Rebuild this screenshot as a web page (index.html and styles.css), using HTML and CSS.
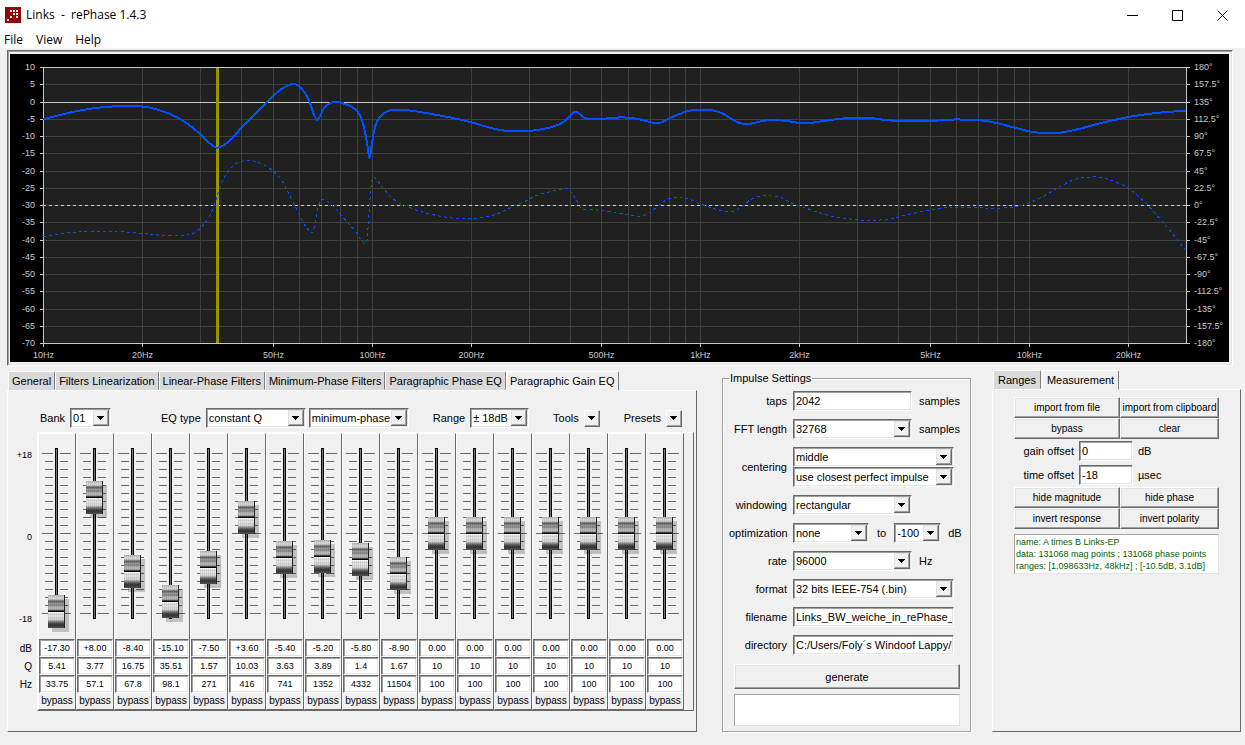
FILE: index.html
```html
<!DOCTYPE html>
<html lang="en">
<head>
    <meta charset="UTF-8">
    <title>Links - rePhase 1.4.3</title>
    <meta name="viewport" content="width=device-width,initial-scale=1.0">
    <link rel="stylesheet" href="styles.css">
</head>
<body>
<div class="titlebar">
    <svg class="logo" width="16" height="16" viewBox="0 0 16 16">
        <path fill="#900" d="M0 0h16v16H0z"/>
        <path fill="#fff" d="M5 3h2v2H5zM8 3h2v2H8zM11 3h2v2h-2zM8 6h2v2H8zM11 6h2v2h-2zM5 9h2v2H5zM11 9h2v2h-2zM2 12h2v2H2z"/>
    </svg>
    <span class="title">Links&nbsp; -&nbsp; rePhase 1.4.3</span>
    <button class="win" aria-label="minimize"><svg width="11" height="11" viewBox="0 0 11 11"><path d="M0 5.5h11"/></svg></button>
    <button class="win" aria-label="maximize"><svg width="11" height="11" viewBox="0 0 11 11"><path d="M.5 .5h10v10H.5z"/></svg></button>
    <button class="win" aria-label="close"><svg width="11" height="11" viewBox="0 0 11 11"><path d="M.5 .5l10 10M10.5 .5l-10 10"/></svg></button>
</div>
<div class="menubar">
    <button>File</button>
    <button>View</button>
    <button>Help</button>
</div>

<div class="graph">
    <svg id="chart"></svg>
</div>

<div class="main">
    <div class="left">
        <div class="tabs">
            <button>General</button>
            <button>Filters Linearization</button>
            <button>Linear-Phase Filters</button>
            <button>Minimum-Phase Filters</button>
            <button>Paragraphic Phase EQ</button>
            <button class="active">Paragraphic Gain EQ</button>
        </div>
        <div class="page">
            <div class="toolbar">
                <div class="tool">
                    <label for="bank">Bank</label>
                    <select id="bank" class="w-bank"><option>01</option></select>
                </div>
                <div class="tool eqtype">
                    <label for="eqtype">EQ type</label>
                    <select id="eqtype" class="w-type"><option>constant Q</option></select>
                    <select class="w-type phase" aria-label="phase type"><option>minimum-phase</option></select>
                </div>
                <div class="tool">
                    <label for="range">Range</label>
                    <select id="range" class="w-range"><option>± 18dB</option></select>
                </div>
                <div class="tool">
                    <label for="tools">Tools</label>
                    <button id="tools" class="drop"></button>
                </div>
                <div class="tool">
                    <label for="presets">Presets</label>
                    <button id="presets" class="drop"></button>
                </div>
            </div>
            <div class="eq">
                <div class="scale">
                    <div class="levels"><span>+18</span><span>0</span><span>-18</span></div>
                    <span>dB</span>
                    <span>Q</span>
                    <span>Hz</span>
                </div>
                <div class="bands" id="bands"></div>
            </div>
        </div>
    </div>

    <fieldset class="impulse">
        <legend>Impulse Settings</legend>
        <div class="rows">
            <label for="taps">taps</label>
            <div class="ctl"><input id="taps" class="w-mid" type="text" value="2042"><span>samples</span></div>
            <label for="fft">FFT length</label>
            <div class="ctl"><select id="fft" class="w-mid"><option>32768</option></select><span>samples</span></div>
            <label for="centering">centering</label>
            <div class="ctl stack">
                <select id="centering" class="w-full"><option>middle</option></select>
                <select class="w-full" aria-label="centering mode"><option>use closest perfect impulse</option></select>
            </div>
            <label for="windowing">windowing</label>
            <div class="ctl"><select id="windowing" class="w-mid"><option>rectangular</option></select></div>
            <label for="optimization">optimization</label>
            <div class="ctl">
                <select id="optimization" class="w-opt"><option>none</option></select>
                <label for="optlevel" class="to">to</label>
                <select id="optlevel" class="w-level"><option>-100</option></select>
                <span>dB</span>
            </div>
            <label for="rate">rate</label>
            <div class="ctl"><select id="rate" class="w-mid"><option>96000</option></select><span>Hz</span></div>
            <label for="format">format</label>
            <div class="ctl"><select id="format" class="w-full"><option>32 bits IEEE-754 (.bin)</option></select></div>
            <label for="filename">filename</label>
            <div class="ctl"><input id="filename" class="w-full" type="text" value="Links_BW_weiche_in_rePhase_eq"></div>
            <label for="directory">directory</label>
            <div class="ctl"><input id="directory" class="w-full" type="text" value="C:/Users/Foly´s Windoof Lappy/Desktop"></div>
        </div>
        <button class="raised generate">generate</button>
        <textarea class="log" aria-label="log" readonly></textarea>
    </fieldset>

    <div class="right">
        <div class="tabs">
            <button>Ranges</button>
            <button class="active">Measurement</button>
        </div>
        <div class="page measure">
            <div class="pair">
                <button class="raised">import from file</button>
                <button class="raised">import from clipboard</button>
                <button class="raised">bypass</button>
                <button class="raised">clear</button>
            </div>
            <div class="offsets">
                <label for="gain">gain offset</label><input id="gain" type="text" value="0"><span>dB</span>
                <label for="time">time offset</label><input id="time" type="text" value="-18"><span>µsec</span>
            </div>
            <div class="pair">
                <button class="raised">hide magnitude</button>
                <button class="raised">hide phase</button>
                <button class="raised">invert response</button>
                <button class="raised">invert polarity</button>
            </div>
            <div class="info">name: A times B Links-EP<br>data: 131068 mag points ; 131068 phase points<br>ranges: [1.098633Hz, 48kHz] ; [-10.5dB, 3.1dB]</div>
        </div>
    </div>
</div>
<script src="app.js"></script>
</body>
</html>
```
FILE: styles.css
```css
*{
    margin: 0;
    padding: 0;
    box-sizing: border-box;
}
body{
    background: #f0f0f0;
    color: #000;
    font: 11px/14px "Liberation Sans", Arial, sans-serif;
}
button, input, select, textarea{
    font: inherit;
    color: inherit;
    border-radius: 0;
    outline: none;
}

/* window */
.titlebar{
    display: flex;
    align-items: center;
    height: 30px;
    padding-left: 5px;
    background: #fff;
    font: 12px/16px "Open Sans", "Noto Sans", sans-serif;
}
.title{
    flex: 1;
    padding-left: 5px;
}
.logo{
    display: block;
}
.win{
    width: 45px;
    height: 28px;
    border: 0;
    background: none;
}
.win svg{
    display: block;
    margin: 0 auto;
    fill: none;
    stroke: #000;
}
.menubar{
    display: flex;
    gap: 13px;
    height: 18px;
    padding: 1px 0 0 4px;
    background: #fff;
}
.menubar button{
    border: 0;
    background: none;
    font: 12px/18px "Open Sans", "Noto Sans", sans-serif;
}

/* graph */
.graph{
    margin: 2px 12px 0 7px;
    padding: 3px 3px 3px 2px;
    border: 1px solid;
    border-color: #696969 #fff #fff #696969;
    box-shadow: inset 1px 1px #a0a0a0, inset -1px -1px #e3e3e3;
}
#chart{
    display: block;
    width: 100%;
    height: 308px;
    background: #000;
    font-size: 9px;
    fill: #c8c8c8;
}
#chart .back{ fill: #202020; }
#chart .grid{ stroke: #404040; }
#chart .axis{ stroke: #c8c8c8; }
#chart .zero{ stroke: #c8c8c8; stroke-dasharray: 3 3; }
#chart .cursor{ fill: #969600; }
#chart .end{ text-anchor: end; }
#chart .mid{ text-anchor: middle; }
#chart .mag, #chart .phase{
    fill: none;
    stroke: #0050ff;
    shape-rendering: crispEdges;
}
#chart .mag{ stroke-width: 2; }
#chart .phase{ stroke-dasharray: 3 3; }

/* lower area */
.main{
    display: grid;
    grid-template-columns: 690fr 253fr 249fr;
    column-gap: 21px;
    padding: 5px 4px 12px 7px;
}
.left, .right{
    display: flex;
    flex-direction: column;
}
.tabs{
    display: flex;
    gap: 1px;
    padding-left: 1px;
}
.tabs button{
    height: 19px;
    padding: 0 4px;
    border: 1px solid;
    border-color: #fff #808080 #d9d9d9 #fff;
    border-radius: 2px 2px 0 0;
    background: #d9d9d9;
    white-space: nowrap;
}
.left .tabs{ gap: 0; }
.left .tabs button{ padding: 0 3px; }
.tabs .active{
    position: relative;
    height: 20px;
    margin-bottom: -1px;
    border-bottom-color: #f0f0f0;
    background: #f0f0f0;
}
.page{
    flex: 1;
    border: 1px solid;
    border-color: #fff #696969 #696969 #fff;
}

/* sunken and raised boxes */
input[type=text], select{
    height: 20px;
    padding: 0 1px 0 2px;
    border: 1px solid;
    border-color: #696969 #fff #fff #696969;
    box-shadow: inset 1px 1px #a0a0a0, inset -1px -1px #e3e3e3;
    background: #fff;
}
select{
    appearance: none;
    background: #fff url("data:image/svg+xml,%3Csvg xmlns='http://www.w3.org/2000/svg' width='16' height='16' shape-rendering='crispEdges'%3E%3Cpath fill='%23696969' d='M0 0h16v16H0z'/%3E%3Cpath fill='%23e3e3e3' d='M0 0h15v15H0z'/%3E%3Cpath fill='%23a0a0a0' d='M1 1h14v14H1z'/%3E%3Cpath fill='%23f0f0f0' d='M1 1h13v13H1z'/%3E%3Cpath d='M4 6h7v1H4zM5 7h5v1H5zM6 8h3v1H6zM7 9h1v1H7z'/%3E%3C/svg%3E") right 1px center no-repeat;
}
.raised{
    border: 1px solid;
    border-color: #fff #696969 #696969 #fff;
    box-shadow: inset -1px -1px #a0a0a0, inset 1px 1px #e3e3e3;
    background: #f0f0f0;
}
.drop{
    width: 16px;
    height: 17px;
    border: 1px solid;
    border-color: #fff #696969 #696969 #fff;
    box-shadow: inset -1px -1px #a0a0a0;
    background: #f0f0f0 url("data:image/svg+xml,%3Csvg xmlns='http://www.w3.org/2000/svg' width='7' height='4' shape-rendering='crispEdges'%3E%3Cpath d='M0 0h7v1H0zM1 1h5v1H1zM2 2h3v1H2zM3 3h1v1H3z'/%3E%3C/svg%3E") center no-repeat;
}

.toolbar{
    display: flex;
    justify-content: space-between;
    align-items: center;
    height: 20px;
    margin: 17px 14px 4px 32px;
}
.tool{
    display: flex;
    align-items: center;
    gap: 5px;
}
.eqtype{ margin-left: 26px; }
.phase{ margin-left: -2px; }
.w-bank{ width: 41px; }
.w-type{ width: 100px; }
.w-range{ width: 59px; }

.eq{
    display: flex;
    padding-right: 2px;
}
.scale{
    width: 29px;
    padding-right: 5px;
    text-align: right;
    font-size: 10px;
}
.scale span{
    display: block;
    line-height: 18px;
}
.levels{
    display: flex;
    flex-direction: column;
    justify-content: space-between;
    height: 182px;
    margin: 14px 0 12px;
    font-size: 9px;
}
.bands{
    flex: 1;
    display: flex;
    border: 1px solid;
    border-color: #fff #696969 #696969 #fff;
}
.band{
    width: 38px;
    border: 1px solid;
    border-color: #fff #696969 #696969 #fff;
    font-size: 9px;
}
.fader{
    height: 205px;
    padding-top: 2px;
    background:
        linear-gradient(#777, #777) 17px 15px/1px 169px no-repeat,
        linear-gradient(#000, #000) 16px 14px/3px 171px no-repeat,
        linear-gradient(#696969, #696969) 3px 19px/11px 1px no-repeat,
        linear-gradient(#696969, #696969) 21px 19px/11px 1px no-repeat,
        linear-gradient(#696969, #696969) 3px 99px/11px 1px no-repeat,
        linear-gradient(#696969, #696969) 21px 99px/11px 1px no-repeat,
        linear-gradient(#696969, #696969) 3px 179px/11px 1px no-repeat,
        linear-gradient(#696969, #696969) 21px 179px/11px 1px no-repeat,
        repeating-linear-gradient(#696969 0 1px, transparent 1px 8px) 6px 19px/8px 161px no-repeat,
        repeating-linear-gradient(#696969 0 1px, transparent 1px 8px) 21px 19px/8px 161px no-repeat;
}
.fader input{
    appearance: none;
    display: block;
    width: 35px;
    height: 195px;
    background: none;
    writing-mode: vertical-lr;
    direction: rtl;
}
.fader input::-webkit-slider-runnable-track{
    width: 35px;
    height: 195px;
}
.fader input::-webkit-slider-thumb{
    appearance: none;
    width: 17px;
    height: 33px;
    margin-left: 9px;
    border-right: 1px solid #222;
    box-shadow: 4px 4px rgba(0,0,0,.2);
    background:
        repeating-linear-gradient(90deg, rgba(0,0,0,.08) 0 1px, transparent 1px 2px),
        linear-gradient(#bbb 0 1px, #d8d8d8 2px 4px, #aaa 5px, #666 6px 7px, #999 8px 9px, #808080 10px, #b8b8b8 12px 14px, #888 15px, #000 16px 17px, #fff 17px 18px, #ccc 19px, #f0f0f0 21px, #ccc 23px, #e8e8e8 24px, #999 26px, #555 28px, #333 30px, #555 33px);
}
.band input[type=text]{
    display: block;
    width: 36px;
    height: 18px;
    padding: 0;
    text-align: center;
}
.bypass{
    display: block;
    width: 100%;
    height: 16px;
    border: 0;
    background: none;
    font-size: 10px;
}

/* impulse settings */
.impulse{
    min-width: 0;
    margin-left: 4px;
    padding: 0 10px 5px 6px;
    border: 1px solid #a0a0a0;
    box-shadow: 1px 1px #fff, inset 1px 1px #fff;
}
.impulse legend{
    padding: 0 1px;
    background: #f0f0f0;
}
.rows{
    display: grid;
    grid-template-columns: 58px 1fr;
    gap: 8px 6px;
    align-items: center;
    margin-top: 6px;
}
.rows > label{
    text-align: right;
}
.ctl{
    display: flex;
    align-items: center;
    gap: 7px;
}
.stack{
    flex-direction: column;
    align-items: flex-start;
    gap: 0;
}
.to{ padding: 0 1px; }
.w-mid{ width: 119px; }
.w-full{ width: 161px; }
.w-opt{ width: 76px; }
.w-level{ width: 47px; }
.generate{
    display: block;
    width: calc(100% - 5px);
    height: 25px;
    margin: 9px 0 5px 5px;
}
.log{
    display: block;
    width: calc(100% - 5px);
    height: 32px;
    margin-left: 5px;
    border: 1px solid;
    border-color: #a0a0a0 #e3e3e3 #e3e3e3 #a0a0a0;
    background: #fff;
    resize: none;
}

/* measurement */
.right .tabs{ margin-top: -1px; }
.measure{
    padding: 7px 21px;
}
.pair{
    display: grid;
    grid-template-columns: 106fr 99fr;
    font-size: 10px;
}
.pair button{
    height: 21px;
    white-space: nowrap;
}
.offsets{
    display: grid;
    grid-template-columns: 60px 54px 1fr;
    gap: 4px;
    column-gap: 5px;
    align-items: center;
    padding: 2px 0;
}
.offsets label{ text-align: right; }
.info{
    margin-top: 5px;
    padding: 1px;
    border: 1px solid;
    border-color: #a0a0a0 #e3e3e3 #e3e3e3 #a0a0a0;
    background: #fff;
    color: #006400;
    font-size: 9px;
    line-height: 12px;
    white-space: nowrap;
}
```
FILE: app.js
```js
// gain (dB), Q, frequency (Hz)
var bands = [
    ["-17.30", "5.41", "33.75"],
    ["+8.00", "3.77", "57.1"],
    ["-8.40", "16.75", "67.8"],
    ["-15.10", "35.51", "98.1"],
    ["-7.50", "1.57", "271"],
    ["+3.60", "10.03", "416"],
    ["-5.40", "3.63", "741"],
    ["-5.20", "3.89", "1352"],
    ["-5.80", "1.4", "4332"],
    ["-8.90", "1.67", "11504"]
];
while (bands.length < 17) bands.push(["0.00", "10", "100"]);

document.querySelector("#bands").innerHTML = bands.map(function (b, i) {
    var n = "band " + (i + 1);
    return '<div class="band">' +
        '<div class="fader"><input type="range" min="-18" max="18" step="0.1" value="' + parseFloat(b[0]) + '" aria-label="' + n + ' level"></div>' +
        '<input type="text" value="' + b[0] + '" aria-label="' + n + ' dB">' +
        '<input type="text" value="' + b[1] + '" aria-label="' + n + ' Q">' +
        '<input type="text" value="' + b[2] + '" aria-label="' + n + ' Hz">' +
        '<button class="bypass">bypass</button></div>';
}).join("");

// curves, in the units of the plot viewBox
var mag = [43,119.5, 60,115, 80,110.5, 100,107.5, 120,106, 130,105.7, 143,106.5, 155,109, 170,114, 185,122, 200,134, 210,143.5,
    217,147.7, 224,145, 232,138.5, 242,127, 255,114, 268,101, 280,90, 288,85.5, 293,84, 298,85.5, 305,93, 310,103, 314,115, 317,120,
    320,116, 324,108, 330,103.3, 336,102, 343,103.3, 350,106, 357,111, 362,120, 366,137, 369,156, 370,156, 372,143, 375,127,
    379,118, 385,112.5, 392,110, 400,110, 408,110.3, 420,112, 437,115, 453,118, 470,122, 483,125.7, 495,129, 508,131, 528,131,
    543,129, 555,126, 563,122.3, 568,118, 573,113, 576,111.7, 580,114.3, 585,118, 590,119, 603,118.7, 617,117.7, 622,117, 628,118,
    637,118.7, 647,121.3, 655,123, 662,122.3, 668,119, 677,115, 688,111, 698,110, 712,110.3, 722,113.3, 730,118, 737,122, 745,124,
    753,123.3, 762,121, 772,120, 787,121, 800,123, 812,122.7, 830,120, 845,118.3, 858,118, 873,118.3, 885,120, 897,120.7, 930,120.7,
    950,120, 957,119, 963,120, 980,120.3, 997,123, 1013,127.3, 1033,132, 1049,133.3, 1063,132.3, 1080,128.7, 1097,124, 1113,120.3,
    1130,116.7, 1150,113.7, 1167,112, 1186,110.7];
var phase = [43,236.5, 60,234, 80,231.7, 105,231.3, 122,231.7, 142,233.3, 158,235, 180,235.2, 190,234.5, 197,231, 205,223, 211,213,
    216,200, 219,190, 224,178, 230,169, 236,163.5, 243,161, 254,161, 262,164, 272,170, 280,178, 286,188, 294,204, 300,216, 306,227,
    312,233, 314,228, 317,212, 320,202, 323,199, 328,202, 336,209, 347,222, 356,232, 361,240, 365,243.5, 367,240, 368,228,
    369.5,207, 371,187, 373,177, 377,180, 383,188, 392,198, 400,203.5, 407,206.3, 415,209.7, 433,214.7, 455,218.3, 475,218.3,
    490,216, 502,212, 515,205.7, 527,200.3, 538,195, 552,191.3, 565,188.7, 569,189.3, 573,194.7, 577,201, 580,207.3, 585,209.3,
    597,210, 612,211.7, 627,214.7, 638,216.3, 647,214.3, 655,208.7, 663,202, 670,198.3, 678,197, 687,198.3, 700,203.7, 712,208,
    725,211.7, 733,211.3, 742,206.7, 750,200, 758,196.7, 768,195.3, 782,198, 793,203.7, 805,207.7, 815,211.3, 830,215.7, 847,218.7,
    867,220.3, 888,219.3, 903,215.7, 920,212, 943,208, 957,207.3, 980,207.7, 993,208.3, 1010,207.3, 1023,205, 1040,198, 1057,188.3,
    1073,180, 1087,177.3, 1100,177.3, 1113,181, 1127,187.3, 1138,196, 1150,207.3, 1163,222.3, 1175,236.7, 1185,250];

// smooth path through the points
function curve(p) {
    var d = "M" + p[0] + " " + p[1];
    for (var i = 0; i < p.length - 2; i += 2) {
        var a = Math.max(i - 2, 0), e = Math.min(i + 4, p.length - 2);
        d += "C" + [
            p[i] + (p[i + 2] - p[a]) / 6, p[i + 1] + (p[i + 3] - p[a + 1]) / 6,
            p[i + 2] - (p[e] - p[i]) / 6, p[i + 3] - (p[e + 1] - p[i + 1]) / 6,
            p[i + 2], p[i + 3]
        ].join(" ");
    }
    return d;
}

function draw() {
    var svg = document.querySelector("#chart");
    var left = 33, top = 13, h = 276, w = svg.clientWidth - left - 43;
    var right = left + w, bottom = top + h, out = "";

    function line(cls, x1, y1, x2, y2) {
        out += '<path class="' + cls + '" d="M' + x1 + " " + y1 + "L" + x2 + " " + y2 + '"/>';
    }
    function text(cls, x, y, s) {
        out += '<text class="' + cls + '" x="' + x + '" y="' + y + '">' + s + '</text>';
    }
    function fx(f) {
        return left + Math.round(w * Math.log(f / 10) / Math.log(3000)) + 0.5;
    }

    out += '<rect class="back" x="' + left + '" y="' + top + '" width="' + w + '" height="' + h + '"/>';
    for (var dec = 10; dec <= 10000; dec *= 10) {
        for (var k = 1; k < 10 && k * dec < 30000; k++) {
            var f = k * dec, x = fx(f);
            line("grid", x, top, x, bottom);
            if (k == 1 || k == 2 || k == 5) {
                line("axis", x, bottom, x, bottom + 4);
                text("mid", x, bottom + 15, f < 1000 ? f + "Hz" : f / 1000 + "kHz");
            }
        }
    }
    for (var i = 0; i <= 16; i++) {
        var y = top + Math.round(i * h / 16);
        line(i == 0 || i == 2 || i == 16 ? "axis" : "grid", left, y + 0.5, right, y + 0.5);
        line("axis", left - 3, y + 0.5, left, y + 0.5);
        line("axis", right, y + 0.5, right + 4, y + 0.5);
        text("end", left - 8, y + 3, 10 - i * 5);
        text("", right + 8, y + 3, 180 - i * 22.5 + "°");
    }
    line("axis", left + 0.5, top, left + 0.5, bottom);
    line("axis", right + 0.5, top, right + 0.5, bottom + 1);
    line("zero", left, top + h / 2 + 0.5, right, top + h / 2 + 0.5);
    out += '<svg x="' + left + '" y="' + top + '" width="' + w + '" height="' + h + '" viewBox="43 67 1143 276" preserveAspectRatio="none">' +
        '<rect class="cursor" x="216" y="68" width="3" height="275"/>' +
        '<path class="phase" d="' + curve(phase) + '"/>' +
        '<path class="mag" d="' + curve(mag) + '"/></svg>';
    svg.innerHTML = out;
}
window.addEventListener("resize", draw, false);
draw();
```
